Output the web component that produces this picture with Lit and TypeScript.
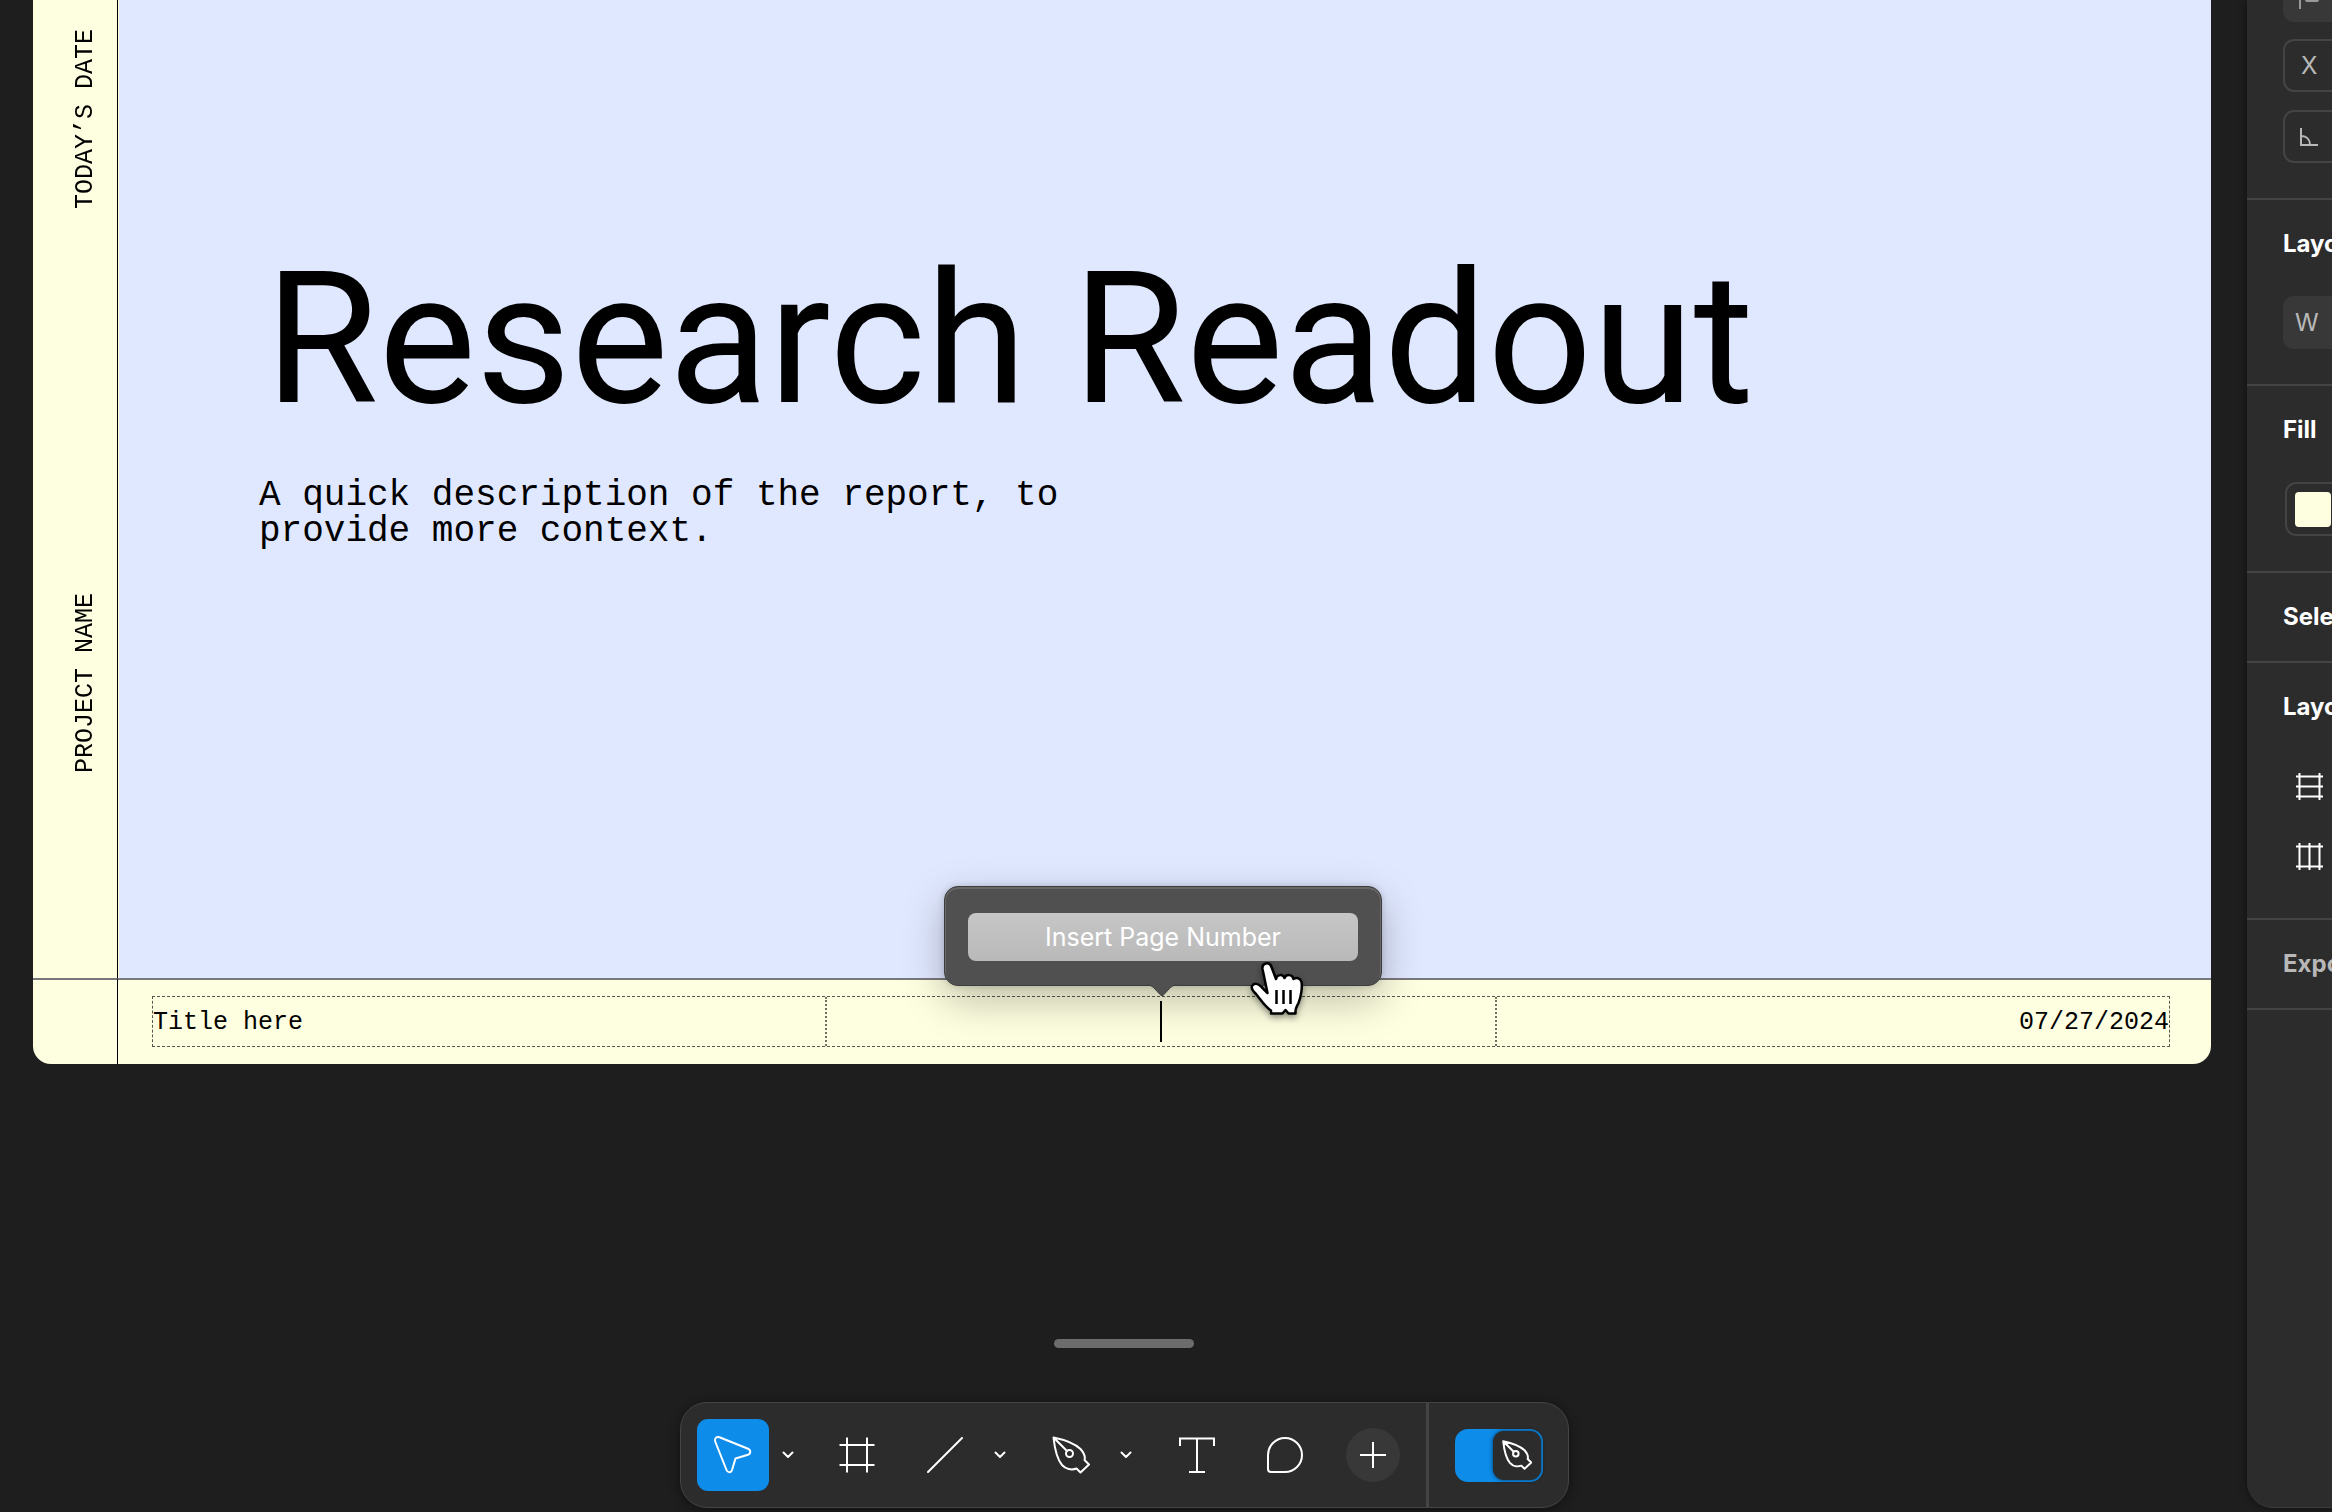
import { LitElement, html, css, svg } from "lit";
import { customElement } from "lit/decorators.js";

const chevron = html`<svg width="12" height="8" viewBox="0 0 12 8" fill="none" stroke="#fff" stroke-width="2" stroke-linecap="round" stroke-linejoin="round"><path d="M1.500 1.500 6 6l4.500-4.500" /></svg>`;

const penPath = svg`<path d="M1.500 1.500C9 3 21 6 28.500 13c3.500 4 5 8 4 11l4.500 4.500-8.500 8-4-4c-5 2-11 .5-14.500-3.500C5 23 2.500 11 1.500 1.500Zm0 0 13 13" /><circle cx="17.500" cy="17.500" r="3.500" />`;

const icons = {
  move: html`<svg width="40" height="40" viewBox="0 0 40 40" fill="none" stroke="#fff" stroke-width="2" stroke-linejoin="round"><path d="M2.200 6.500 13.500 35c1.200 3 4.500 3 5.500 0l3.500-11.500 12.500-3.800c3-1 3-4.700 0-5.900L6.500 2.300C3.500 1.200 1 3.500 2.200 6.500Z" /></svg>`,
  frame: html`<svg width="36" height="36" viewBox="0 0 36 36" fill="none" stroke="#fff" stroke-width="2"><path d="M8 .5v35M28 .5v35M.5 8h35M.5 28h35" /></svg>`,
  line: html`<svg width="36" height="36" viewBox="0 0 36 36" fill="none" stroke="#fff" stroke-width="2" stroke-linecap="round"><path d="M1 35 35 1" /></svg>`,
  pen: html`<svg width="38" height="38" viewBox="0 0 38 38" fill="none" stroke="#fff" stroke-width="2" stroke-linejoin="round">${penPath}</svg>`,
  text: html`<svg width="36" height="36" viewBox="0 0 36 36" fill="none" stroke="#fff" stroke-width="2"><path d="M1 9V1.500h34V9M18 1.500v33M10 35h16" /></svg>`,
  comment: html`<svg width="36" height="36" viewBox="0 0 36 36" fill="none" stroke="#fff" stroke-width="2"><path d="M18 1a17 17 0 0 1 0 34H4a3 3 0 0 1-3-3V18A17 17 0 0 1 18 1Z" /></svg>`,
  plus: html`<svg width="28" height="28" viewBox="0 0 28 28" fill="none" stroke="#fff" stroke-width="2"><path d="M14 1v26M1 14h26" /></svg>`,
};

@customElement("slide-canvas")
export class SlideCanvas extends LitElement {
  static styles = css`
    :host {
      display: block;
      color: #000;
      font-family: "Liberation Mono", monospace;
      font-size: 25px;
      line-height: 32px;
    }
    .slide {
      display: grid;
      grid-template: minmax(0, 978px) 86px / 85px minmax(0, 1fr);
      border-radius: 0 0 18px 18px;
      background: #feffe0;
      overflow: hidden;
    }
    .rail {
      display: flex;
      flex-direction: column;
      align-items: flex-end;
      gap: 384px;
      padding: 29px 15px 0 0;
      border-right: 1px solid #000;
    }
    .label {
      writing-mode: vertical-rl;
      transform: rotate(180deg);
      white-space: nowrap;
    }
    .cover {
      margin-left: 1px;
      padding: 229px 140px 0;
      background: #e0e8ff;
    }
    h1 {
      margin: 0 0 29px;
      padding-left: 6px;
      font: 400 184px/220px Roboto, sans-serif;
      white-space: nowrap;
    }
    .cover p {
      max-width: 830px;
      margin: 0;
      font-size: 36px;
      line-height: 36px;
    }
    .corner,
    .footer {
      border-top: 2px solid #77777c;
    }
    .corner {
      border-right: 1px solid #000;
    }
    .footer {
      padding: 16px 41px 0 34px;
    }
    .cells {
      display: grid;
      grid-template-columns: repeat(3, 1fr);
      border: 1px dashed #57574e;
    }
    .cell {
      display: flex;
      align-items: center;
      box-sizing: border-box;
      height: 49px;
      padding-top: 3px;
    }
    .middle {
      position: relative;
      justify-content: center;
      border: dotted #6e6e63;
      border-width: 0 2px;
      padding-top: 0;
    }
    .end {
      justify-content: flex-end;
    }
    .caret {
      width: 2px;
      height: 41px;
      background: #000;
    }
    .popover {
      position: absolute;
      bottom: calc(100% + 11px);
      left: 50%;
      width: 438px;
      height: 100px;
      box-sizing: border-box;
      margin-left: -217px;
      padding: 26px 23px;
      border: 1px solid #3d3d3e;
      border-radius: 14px;
      background: #505050;
      box-shadow:
        inset 0 1px 0 1px #686868,
        0 14px 40px rgba(0, 0, 0, 0.26),
        0 0 6px rgba(0, 0, 0, 0.16);
    }
    .tail {
      position: absolute;
      top: 97px;
      left: 202px;
    }
    .insert {
      display: block;
      width: 100%;
      height: 48px;
      padding: 0;
      border: 0;
      border-radius: 8px;
      background: linear-gradient(#c6c6c6, #b9b9b9);
      color: #fff;
      font: 400 25px/32px Inter, sans-serif;
    }
    .pointer {
      position: absolute;
      top: 71px;
      left: 304px;
      filter: drop-shadow(0 3px 3px rgba(0, 0, 0, 0.4));
    }
  `;

  render() {
    return html`
      <article class="slide">
        <div class="rail">
          <span class="label">TODAY’S DATE</span>
          <span class="label">PROJECT NAME</span>
        </div>
        <div class="cover">
          <h1>Research Readout</h1>
          <p>A quick description of the report, to provide more context.</p>
        </div>
        <div class="corner"></div>
        <footer class="footer">
          <div class="cells">
            <div class="cell">Title here</div>
            <div class="cell middle">
              <span class="caret"></span>
              <div class="popover">
                <button class="insert">Insert Page Number</button>
                <svg class="tail" width="30" height="13" viewBox="0 0 30 13">
                  <path d="M0 0v1c4 0 6 2 8 4l5 5.500c1.500 1.500 2.500 1.500 4 0L22 5c2-2 4-4 8-4V0Z" fill="#505050" />
                  <path d="M0 1c4 0 6 2 8 4l5 5.500c1.500 1.500 2.500 1.500 4 0L22 5c2-2 4-4 8-4" fill="none" stroke="#3d3d3e" />
                </svg>
                <svg class="pointer" width="60" height="62" viewBox="0 0 60 62">
                  <path d="M22 55.500v-3C16 49 12 42 7 36c-3-3-5-6-4-8 2-4 7-2 9.500 1l6 6-5-24c-1-6 7-8 9-2l4.500 12c1-5 7-5 8.500-1 1.500-4 8-4 9 1 3-2 7-1 8 3 1 5-.500 15-3 21-2 4-3 5-3 8v2.500h-7l-3-3.500-3 3.500Z" fill="#fff" stroke="#000" stroke-width="2.500" stroke-linejoin="round" />
                  <path d="M27.500 32v14M34.500 32v14M41.500 32v14" stroke="#000" stroke-width="2.500" />
                </svg>
              </div>
            </div>
            <div class="cell end">07/27/2024</div>
          </div>
        </footer>
      </article>
    `;
  }
}

@customElement("tool-bar")
export class ToolBar extends LitElement {
  static styles = css`
    :host {
      display: block;
    }
    .bar {
      display: flex;
      align-items: center;
      height: 104px;
      padding-left: 16px;
      border: 1px solid #444;
      border-radius: 27px;
      background: #2c2c2c;
      box-shadow: 0 2px 12px rgba(0, 0, 0, 0.45);
    }
    button {
      display: grid;
      place-items: center;
      flex: none;
      width: 72px;
      height: 72px;
      padding: 0;
      border: 0;
      border-radius: 11px;
      background: none;
    }
    .active {
      background: #0d8cea;
    }
    .more {
      width: 38px;
    }
    .gap {
      margin-left: 14px;
    }
    .tight {
      margin-left: 16px;
    }
    .add {
      width: 54px;
      height: 54px;
      margin-left: 25px;
      border-radius: 50%;
      background: #383838;
    }
    .mode {
      display: flex;
      align-items: center;
      align-self: stretch;
      margin-left: 26px;
      padding: 0 25px 0 26px;
      border-left: 3px solid #444;
    }
    .switch {
      display: flex;
      position: relative;
      justify-content: flex-end;
      width: 88px;
      height: 53px;
      box-sizing: border-box;
      padding: 2px;
      border-radius: 13px;
      background: #0d8cea;
    }
    .check {
      position: absolute;
      inset: 0;
      width: 100%;
      height: 100%;
      margin: 0;
      opacity: 0;
    }
    .knob {
      display: grid;
      place-items: center;
      width: 48px;
      height: 49px;
      border-radius: 11px;
      background: #2c2c2c;
      box-shadow: 0 0 4px rgba(0, 0, 0, 0.6);
    }
  `;

  render() {
    return html`
      <nav class="bar">
        <button class="active" aria-label="Move">${icons.move}</button>
        <button class="more" aria-label="Move tools">${chevron}</button>
        <button class="gap" aria-label="Frame">${icons.frame}</button>
        <button class="tight" aria-label="Line">${icons.line}</button>
        <button class="more" aria-label="Shape tools">${chevron}</button>
        <button class="tight" aria-label="Pen">${icons.pen}</button>
        <button class="more" aria-label="Drawing tools">${chevron}</button>
        <button class="tight" aria-label="Text">${icons.text}</button>
        <button class="tight" aria-label="Comment">${icons.comment}</button>
        <button class="add" aria-label="Add">${icons.plus}</button>
        <div class="mode">
          <label class="switch">
            <input class="check" type="checkbox" checked aria-label="Design mode" />
            <span class="knob">
              <svg width="30" height="30" viewBox="0 0 38 38" fill="none" stroke="#fff" stroke-width="2.500" stroke-linejoin="round">${penPath}</svg>
            </span>
          </label>
        </div>
      </nav>
    `;
  }
}

@customElement("side-panel")
export class SidePanel extends LitElement {
  static styles = css`
    :host {
      display: block;
      overflow: hidden;
      border: 1px solid #3a3a3a;
      border-width: 0 0 1px;
      border-radius: 0 0 0 26px;
      background: #2c2c2c;
      box-shadow: 0 0 8px rgba(0, 0, 0, 0.5);
      color: #fff;
      font: 600 24px/32px Inter, sans-serif;
      white-space: nowrap;
    }
    section {
      box-sizing: border-box;
      padding-left: 36px;
      border-bottom: 2px solid #444;
    }
    h2 {
      margin: 0;
      padding: 28px 0;
      font-size: 24px;
      line-height: 32px;
    }
    .position {
      height: 200px;
    }
    .layout {
      height: 186px;
    }
    .fill {
      height: 187px;
    }
    .colors {
      height: 90px;
    }
    .guides {
      height: 257px;
    }
    .export {
      height: 90px;
      color: #b8b8b8;
    }
    .field {
      display: flex;
      align-items: center;
      box-sizing: border-box;
      width: 200px;
      height: 53px;
      border: 2px solid #444;
      border-radius: 11px;
      padding-left: 14px;
      color: #b8b8b8;
      font-size: 24px;
      font-weight: 400;
    }
    .solid {
      border-color: #383838;
      background: #383838;
      padding-left: 10px;
    }
    .align {
      height: 22px;
      border-top: 0;
      border-radius: 0 0 11px 11px;
      margin-bottom: 17px;
      padding-left: 13px;
      align-items: flex-start;
    }
    .x {
      margin-bottom: 18px;
      padding-left: 16px;
    }
    .paint {
      height: 54px;
      margin: 8px 0 0 2px;
      padding-left: 8px;
    }
    .w {
      margin-top: 8px;
    }
    .swatch {
      width: 36px;
      height: 35px;
      border-radius: 4px;
      background: #feffe0;
    }
    .guide {
      display: block;
      margin: 0 0 43px 13px;
    }
    .first {
      margin-top: 22px;
    }
  `;

  render() {
    return html`
      <section class="position">
        <div class="field solid align">
          <svg width="22" height="9" viewBox="0 0 22 9" stroke="#9a9a9a" stroke-width="2" fill="none"><path d="M2 0v9" /><path d="M9 0h10" stroke-width="4" stroke-linecap="round" /></svg>
        </div>
        <div class="field x">X</div>
        <div class="field">
          <svg width="20" height="20" viewBox="0 0 20 20" stroke="#b8b8b8" stroke-width="2" fill="none"><path d="M2 1v17h17M2 9c6 0 9 4 9 9" /></svg>
        </div>
      </section>
      <section class="layout">
        <h2>Layout</h2>
        <div class="field solid w">W</div>
      </section>
      <section class="fill">
        <h2>Fill</h2>
        <div class="field paint"><span class="swatch"></span></div>
      </section>
      <section class="colors"><h2>Selection colors</h2></section>
      <section class="guides">
        <h2>Layout guide</h2>
        <svg class="guide first" width="27" height="27" viewBox="0 0 27 27" stroke="#fff" stroke-width="2" fill="none"><path d="M3.500 0v27M23.500 0v27M0 3.500h27M0 13.500h27M0 23.500h27" /></svg>
        <svg class="guide" width="27" height="27" viewBox="0 0 27 27" stroke="#fff" stroke-width="2" fill="none"><path d="M3.500 0v27M13.500 0v27M23.500 0v27M0 3.500h27M0 23.500h27" /></svg>
      </section>
      <section class="export"><h2>Export</h2></section>
    `;
  }
}

@customElement("app-root")
export class AppRoot extends LitElement {
  static styles = css`
    :host {
      display: block;
    }
    .app {
      display: grid;
      grid-template-columns: minmax(0, 1fr) 85px;
      box-sizing: border-box;
      height: 100vh;
      padding-bottom: 4px;
      overflow: hidden;
      background: #1e1e1e;
    }
    .stage {
      display: flex;
      flex-direction: column;
      padding: 0 36px 0 33px;
    }
    .dock {
      display: flex;
      flex-direction: column;
      align-items: center;
      gap: 54px;
      margin: auto 8px 0 0;
      padding-left: 12px;
    }
    .grip {
      width: 140px;
      height: 9px;
      border-radius: 5px;
      background: #6c6c6c;
    }
  `;

  render() {
    return html`
      <main class="app">
        <div class="stage">
          <slide-canvas></slide-canvas>
          <div class="dock">
            <div class="grip"></div>
            <tool-bar></tool-bar>
          </div>
        </div>
        <side-panel></side-panel>
      </main>
    `;
  }
}
